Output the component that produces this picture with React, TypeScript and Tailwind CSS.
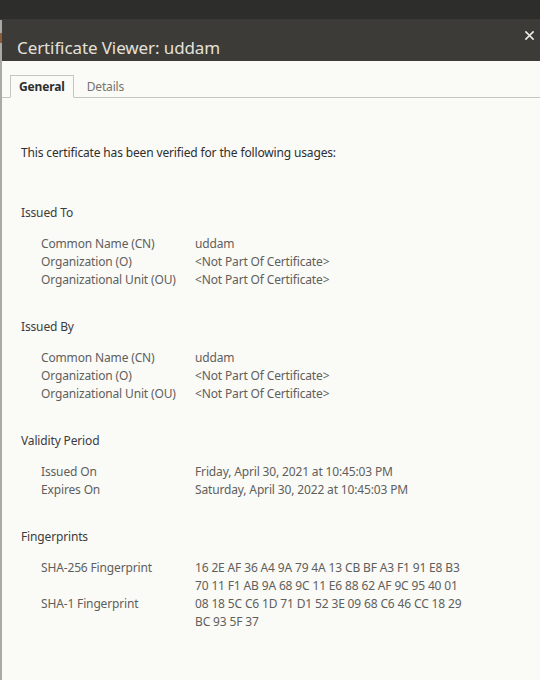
import type { ReactNode } from "react";

type Row = { label: string; value: string[] };

const sections: { title: string; rows: Row[] }[] = [
  {
    title: "Issued To",
    rows: [
      { label: "Common Name (CN)", value: ["uddam"] },
      { label: "Organization (O)", value: ["<Not Part Of Certificate>"] },
      { label: "Organizational Unit (OU)", value: ["<Not Part Of Certificate>"] },
    ],
  },
  {
    title: "Issued By",
    rows: [
      { label: "Common Name (CN)", value: ["uddam"] },
      { label: "Organization (O)", value: ["<Not Part Of Certificate>"] },
      { label: "Organizational Unit (OU)", value: ["<Not Part Of Certificate>"] },
    ],
  },
  {
    title: "Validity Period",
    rows: [
      { label: "Issued On", value: ["Friday, April 30, 2021 at 10:45:03 PM"] },
      { label: "Expires On", value: ["Saturday, April 30, 2022 at 10:45:03 PM"] },
    ],
  },
  {
    title: "Fingerprints",
    rows: [
      {
        label: "SHA-256 Fingerprint",
        value: [
          "16 2E AF 36 A4 9A 79 4A 13 CB BF A3 F1 91 E8 B3",
          "70 11 F1 AB 9A 68 9C 11 E6 88 62 AF 9C 95 40 01",
        ],
      },
      {
        label: "SHA-1 Fingerprint",
        value: ["08 18 5C C6 1D 71 D1 52 3E 09 68 C6 46 CC 18 29", "BC 93 5F 37"],
      },
    ],
  },
];

function Section({ title, children }: { title: string; children: ReactNode }) {
  return (
    <section className="mt-[29px] first:mt-0">
      <h2 className="h-[18px] leading-[18px] text-[#3c3c3c]">{title}</h2>
      <div className="mt-[13px] pl-5">{children}</div>
    </section>
  );
}

export default function App() {
  return (
    <div className="flex h-[680px] w-[540px] flex-col overflow-hidden bg-[#2d2d2b] font-['Noto_Sans',sans-serif]">
      <div className="h-[20px] border-b border-[#3a3a37]" />
      <div className="flex flex-1 flex-col border-l-2 border-[#a9a9a6]">
        <header className="relative flex h-[41px] items-end bg-[#3c3b37] pb-px pl-[15px]">
          {/* sliver of the window behind */}
          <span className="absolute -left-[2px] top-[13px] h-[10px] w-[2px] bg-[#8c5b3b]" />
          <h1 className="text-[17px] leading-6 tracking-[-0.1px] text-[#e4e1da]">Certificate Viewer: uddam</h1>
          <button className="absolute right-[3px] top-[7px] flex size-[16px] items-center justify-center text-[#ecebe7]">
            <svg viewBox="0 0 16 16" className="size-[11px]" fill="none" stroke="currentColor" strokeWidth="2.2">
              <path d="M2 2l12 12M14 2L2 14" />
            </svg>
          </button>
        </header>
        <main className="flex-1 bg-[#fafaf7] text-[12px] tracking-[-0.15px]">
          <nav className="flex h-[37px] items-end border-b border-[#c5c5c1] pl-[8px]">
            <div className="-mb-px flex h-[23px] items-center border border-b-[#fafaf7] border-[#c5c5c1] px-[8px] pt-px font-bold text-[#2e2e2e]">
              General
            </div>
            <div className="flex h-[22px] items-center px-[13px] pt-px text-[#75756f]">Details</div>
          </nav>
          <div className="px-[19px]">
            <p className="mt-[46px] h-[18px] leading-[18px] text-[#2e2e2e]">
              This certificate has been verified for the following usages:
            </p>
            <div className="mt-[42px]">
              {sections.map((s) => (
                <Section key={s.title} title={s.title}>
                  {s.rows.map((r) => (
                    <div key={r.label} className="flex leading-[18px] text-[#5f5f5c]">
                      <div className="w-[154px] shrink-0">{r.label}</div>
                      <div>
                        {r.value.map((v) => (
                          <div key={v}>{v}</div>
                        ))}
                      </div>
                    </div>
                  ))}
                </Section>
              ))}
            </div>
          </div>
        </main>
      </div>
    </div>
  );
}
